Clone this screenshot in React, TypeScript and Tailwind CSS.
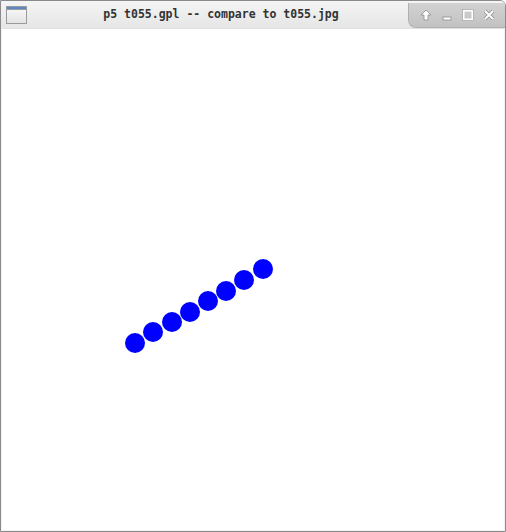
import React from "react";

const dots = [
  [135, 343],
  [153, 332],
  [172, 322],
  [190, 312],
  [208, 301],
  [226, 291],
  [244, 280],
  [263, 269],
];

export default function App() {
  return (
    <div className="w-[506px] h-[532px] flex flex-col bg-[#f2f2f2] border border-[#8a8a8a] rounded-tr-[6px] overflow-hidden">
      <div className="relative h-[28px] flex items-center bg-gradient-to-b from-[#f4f4f4] to-[#e6e6e6]">
        <div className="ml-[5px] w-[21px] h-[18px] border border-[#9a9a9a] bg-gradient-to-b from-[#fafafa] to-[#e4e4e4] flex flex-col">
          <div className="h-[3px] bg-[#5b86c8] border-b border-[#9a9a9a]" />
        </div>
        <div className="flex-1 text-center text-[11.5px] font-bold text-[#333] font-['DejaVu_Sans_Mono',monospace] pr-[92px] mr-[-2px]">
          p5 t055.gpl -- compare to t055.jpg
        </div>
        <div className="absolute right-0 top-[2px] h-[25px] w-[97px] bg-gradient-to-b from-[#d2d2d2] to-[#c2c2c2] rounded-bl-[8px] border-l border-b border-[#b0b0b0] flex items-center justify-around px-[6px] text-white">
          <svg width="12" height="12" viewBox="0 0 12 12">
            <path d="M6 1 L11 6 H8 V11 H4 V6 H1 Z" fill="#fff" stroke="#8c8c8c" strokeWidth="0.8" />
          </svg>
          <svg width="12" height="12" viewBox="0 0 12 12">
            <rect x="2" y="8" width="8" height="3" fill="#fff" stroke="#8c8c8c" strokeWidth="0.8" />
          </svg>
          <svg width="12" height="12" viewBox="0 0 12 12">
            <rect x="1.5" y="1.5" width="9" height="9" fill="none" stroke="#fff" strokeWidth="2" />
            <rect x="0.5" y="0.5" width="11" height="11" fill="none" stroke="#9a9a9a" strokeWidth="0.6" />
          </svg>
          <svg width="12" height="12" viewBox="0 0 12 12">
            <path d="M2 2 L10 10 M10 2 L2 10" stroke="#8c8c8c" strokeWidth="3.4" />
            <path d="M2 2 L10 10 M10 2 L2 10" stroke="#fff" strokeWidth="2" />
          </svg>
        </div>
      </div>
      <div className="flex-1 mx-[1px] mb-[1px] bg-white border-t border-[#e0e0e0] relative">
        <svg width="502" height="501" className="block">
          {dots.map(([x, y], i) => (
            <circle key={i} cx={x - 2} cy={y - 29} r={10} fill="#0000ff" />
          ))}
        </svg>
      </div>
    </div>
  );
}
